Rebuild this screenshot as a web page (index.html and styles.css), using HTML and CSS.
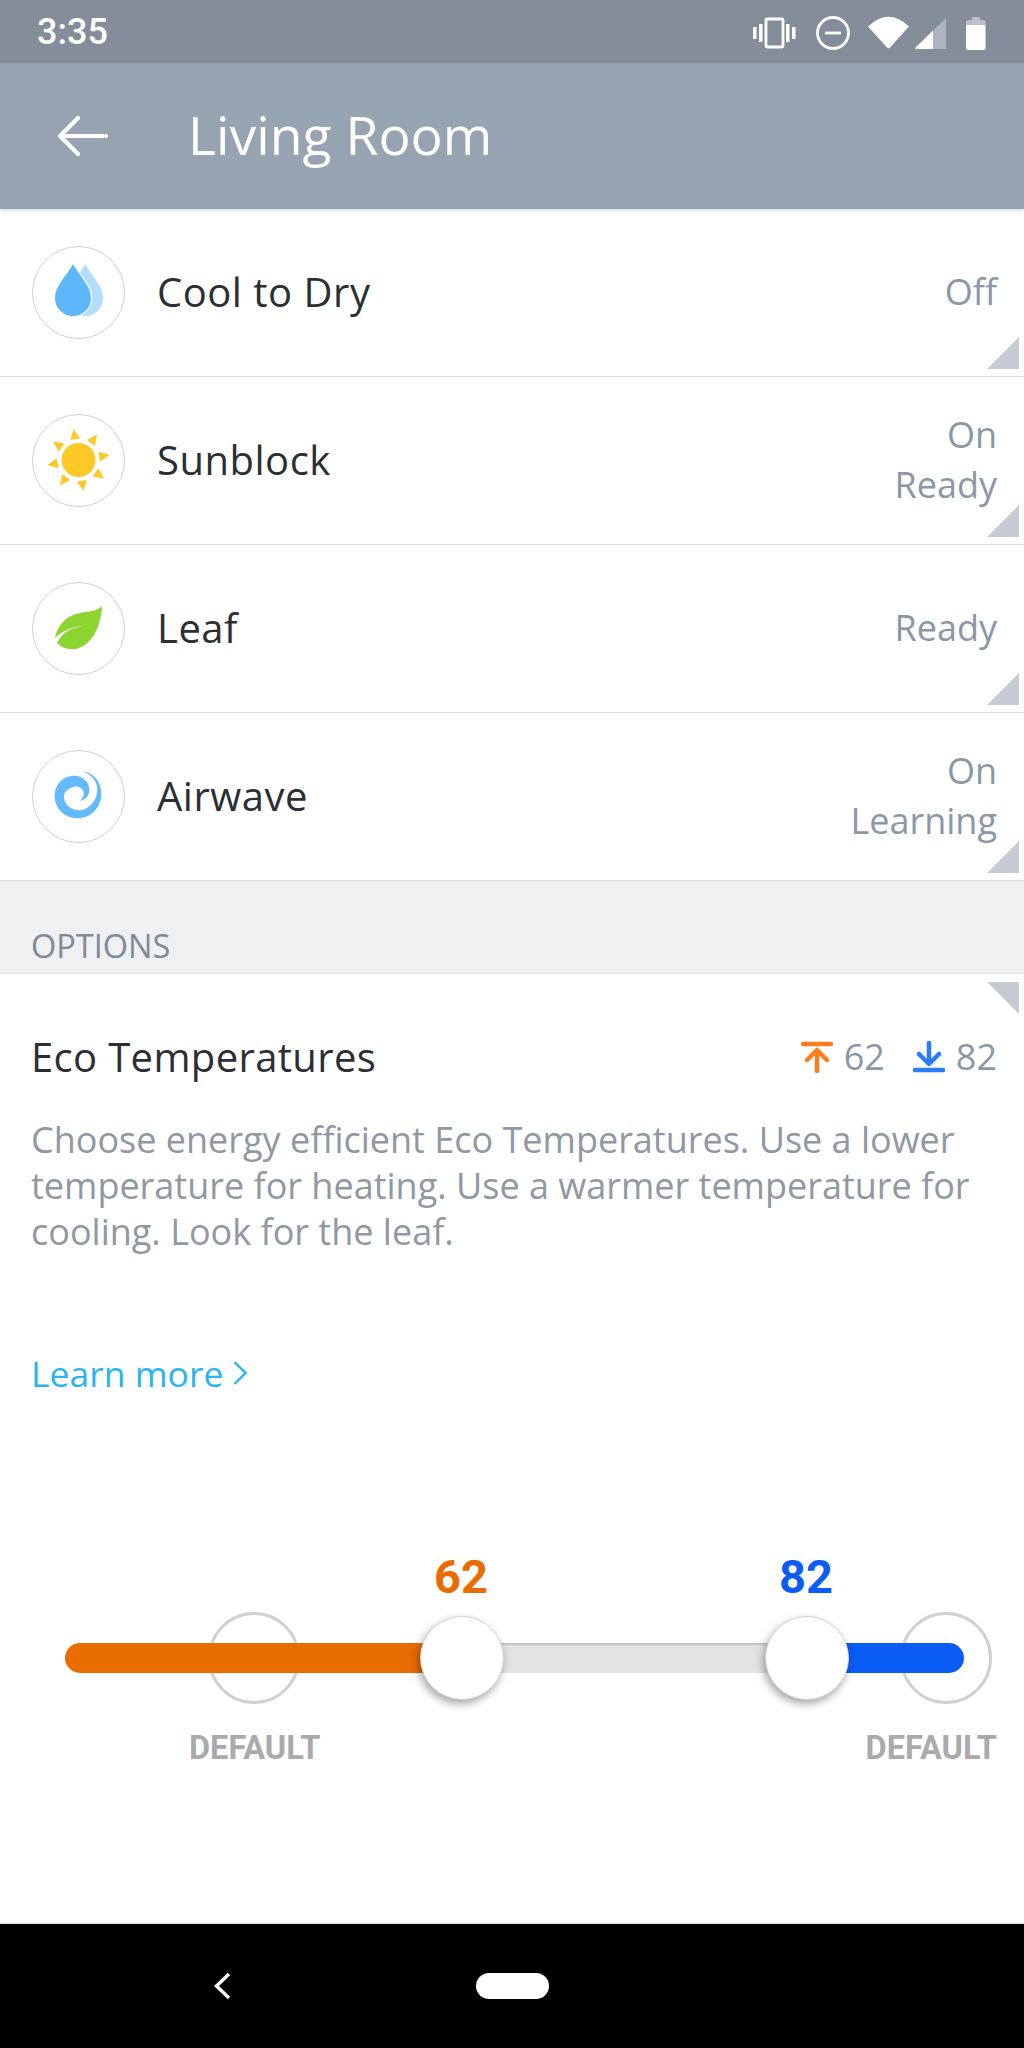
FILE: index.html
```html
<!DOCTYPE html>
<html lang="en">
<head>
<meta charset="utf-8">
<title>Living Room</title>
<link rel="stylesheet" href="styles.css">
</head>
<body>
<header class="status">
  <span class="time">3:35</span>
  <svg class="status-icons" width="250" height="40" viewBox="750 10 250 40">
    <g fill="#fff">
      <rect x="753" y="25" width="3.5" height="12"/><rect x="759" y="22" width="3.5" height="18"/>
      <rect x="786" y="22" width="3.5" height="18"/><rect x="792" y="25" width="3.5" height="12"/>
      <path d="M868 24.500Q888.500 5 909 24.500L890.500 45Q888.500 47.500 886.500 45Z"/>
      <path d="M933 47H916.500Q914.500 47 916 45L933 28.500Z"/>
      <path d="M933 47V28.500L946 16V47Z" fill-opacity=".35"/>
      <path d="M972 18V15.500Q972 15 973 15H979Q980 15 980 15.500V18H983Q985.500 18 985.500 20V23H966V20Q966 18 968.500 18Z" fill-opacity=".45"/>
      <path d="M966 23H985.500V46Q985.500 48 983.500 48H968Q966 48 966 46Z"/>
    </g>
    <g fill="none" stroke="#fff" stroke-width="2.800">
      <rect x="766" y="17" width="17" height="28" rx="1.500"/>
      <circle cx="833" cy="31" r="15.500"/>
      <path d="M825 31H841"/>
    </g>
  </svg>
</header>

<div class="toolbar">
  <svg class="back" width="52" height="44" viewBox="0 0 52 44"><path d="M50 22H4M22 4L4 22L22 40" fill="none" stroke="#fff" stroke-width="4.200" stroke-linecap="round" stroke-linejoin="round"/></svg>
  <h1 class="title">Living Room</h1>
</div>

<section class="rows">
  <div class="row">
    <div class="badge">
      <svg width="94" height="94" viewBox="0 0 94 94">
        <path d="M53 19C59 31 71 40 71 53A18 18 0 0 1 35 53C35 40 47 31 53 19Z" fill="#b4dcfd"/>
        <path d="M41 19C47 31 59 40 59 53A18 18 0 0 1 23 53C23 40 35 31 41 19Z" fill="#5eb6fb" stroke="#fff" stroke-width="2.400" paint-order="stroke"/>
      </svg>
    </div>
    <span class="label">Cool to Dry</span>
    <div class="state">Off</div>
    <span class="corner"></span>
  </div>
  <div class="row">
    <div class="badge">
      <svg width="94" height="94" viewBox="0 0 94 94">
        <g fill="#fdc927">
          <circle cx="46.500" cy="47" r="17"/>
          <path d="M46.500 15.500L41.500 26L51.500 26Z" transform="rotate(-9 46.500 47)"/>
          <path d="M46.500 15.500L41.500 26L51.500 26Z" transform="rotate(36 46.500 47)"/>
          <path d="M46.500 15.500L41.500 26L51.500 26Z" transform="rotate(81 46.500 47)"/>
          <path d="M46.500 15.500L41.500 26L51.500 26Z" transform="rotate(126 46.500 47)"/>
          <path d="M46.500 15.500L41.500 26L51.500 26Z" transform="rotate(171 46.500 47)"/>
          <path d="M46.500 15.500L41.500 26L51.500 26Z" transform="rotate(216 46.500 47)"/>
          <path d="M46.500 15.500L41.500 26L51.500 26Z" transform="rotate(261 46.500 47)"/>
          <path d="M46.500 15.500L41.500 26L51.500 26Z" transform="rotate(306 46.500 47)"/>
        </g>
      </svg>
    </div>
    <span class="label">Sunblock</span>
    <div class="state">On<br>Ready</div>
    <span class="corner"></span>
  </div>
  <div class="row">
    <div class="badge">
      <svg width="94" height="94" viewBox="0 0 94 94">
        <path d="M70 25C64 31 57 30 48 32C36 34 26 42 23 57C31 49 40 47 48 45C54 43 59 41 62 38C57 42 50 45 43 47C35 49 29 54 25 62C30 67 36 69 43 68C58 66 69 48 70 25Z" fill="#8cd42f"/>
      </svg>
    </div>
    <span class="label">Leaf</span>
    <div class="state">Ready</div>
    <span class="corner"></span>
  </div>
  <div class="row">
    <div class="badge">
      <svg width="94" height="94" viewBox="0 0 94 94">
        <g transform="translate(12 10) scale(.3333)">
          <path d="M115 36C150 42 172 70 172 105C172 146 140 178 100 178C62 178 32 148 32 112C32 76 58 50 90 50C118 50 136 70 136 92C136 110 124 122 108 125C118 116 122 106 118 96C112 84 100 80 88 84C70 90 58 100 60 115C62 140 85 155 108 154C135 152 160 125 160 90C160 66 140 46 115 36Z" fill="#63bafc"/>
        </g>
      </svg>
    </div>
    <span class="label">Airwave</span>
    <div class="state">On<br>Learning</div>
    <span class="corner"></span>
  </div>
</section>

<div class="options-head">OPTIONS</div>

<section class="eco">
  <span class="corner corner-top"></span>
  <div class="eco-head">
    <h2 class="eco-title">Eco Temperatures</h2>
    <div class="eco-temps">
      <svg width="32" height="32" viewBox="0 0 32 32"><path d="M2 3H30M16 30V10M6 19L16 9L26 19" fill="none" stroke="#fa7d20" stroke-width="4.500" stroke-linecap="round" stroke-linejoin="round"/></svg>
      <span class="temp-num">62</span>
      <svg class="temp-icon-gap" width="32" height="32" viewBox="0 0 32 32"><path d="M2 29H30M16 2V22M6 13L16 23L26 13" fill="none" stroke="#2a7df4" stroke-width="4.500" stroke-linecap="round" stroke-linejoin="round"/></svg>
      <span class="temp-num">82</span>
    </div>
  </div>
  <p class="eco-text">Choose energy efficient Eco Temperatures. Use a lower temperature for heating. Use a warmer temperature for cooling. Look for the leaf.</p>
  <a class="learn">Learn more<svg width="14" height="24" viewBox="0 0 14 24"><path d="M1.500 1L12.500 12L1.500 23" fill="none" stroke="#29b4f2" stroke-width="2.400"/></svg></a>

  <div class="slider">
    <span class="ring ring-low"></span>
    <span class="ring ring-high"></span>
    <div class="track">
      <span class="seg seg-heat"></span>
      <span class="seg seg-mid"></span>
      <span class="seg seg-cool"></span>
    </div>
    <span class="value value-low">62</span>
    <span class="value value-high">82</span>
    <span class="thumb thumb-low"></span>
    <span class="thumb thumb-high"></span>
    <span class="default default-low">DEFAULT</span>
    <span class="default default-high">DEFAULT</span>
  </div>
</section>

<nav class="navbar">
  <svg class="nav-back" width="18" height="28" viewBox="0 0 18 28"><path d="M16 2L3.500 14L16 26" fill="none" stroke="#fff" stroke-width="3.400"/></svg>
  <span class="nav-home"></span>
</nav>
</body>
</html>
```

FILE: styles.css
```css
* { box-sizing: border-box; }

html, body { margin: 0; padding: 0; }

body {
  width: 1024px;
  height: 2048px;
  display: flex;
  flex-direction: column;
  overflow: hidden;
  background: #fff;
  font-family: "Open Sans", "Liberation Sans", sans-serif;
  color: #2b2f35;
}

.status {
  height: 63px;
  flex: none;
  display: flex;
  align-items: center;
  justify-content: space-between;
  padding: 0 24px 0 37px;
  background: #838e9a;
}

.time {
  font-family: Roboto, sans-serif;
  font-weight: 500;
  font-size: 36px;
  color: #fff;
}

.status-icons { display: block; margin-top: 0; }

.toolbar {
  height: 146px;
  flex: none;
  display: flex;
  align-items: center;
  padding-left: 56px;
  background: #96a3b0;
  box-shadow: 0 1px 4px rgba(0, 0, 0, .18);
  position: relative;
}

.back { flex: none; }

.title {
  margin: 0 0 3px 80px;
  font-weight: 400;
  font-size: 53.500px;
  line-height: 1;
  color: #fff;
}

.rows { flex: none; }

.row {
  height: 168px;
  display: flex;
  align-items: center;
  padding: 0 27px 0 32px;
  border-bottom: 1.500px solid #dcdfe2;
  position: relative;
}

.badge {
  width: 93px;
  height: 93px;
  flex: none;
  margin-bottom: 1px;
  border: 1.500px solid #cfd0d2;
  border-radius: 50%;
  position: relative;
}

.badge svg {
  position: absolute;
  left: -1.500px;
  top: -1.500px;
}

.label {
  margin: 0 0 2px 32px;
  font-size: 40px;
  letter-spacing: .5px;
  color: #2b2f35;
}

.state {
  margin: 0 0 2px auto;
  font-size: 36px;
  line-height: 50px;
  color: #8a97a6;
  text-align: right;
}

.corner {
  position: absolute;
  right: 5px;
  bottom: 7px;
  width: 32px;
  height: 32px;
  background: #c4cbd2;
  clip-path: polygon(100% 0, 100% 100%, 0 100%);
}

.corner-top {
  top: 8px;
  bottom: auto;
  clip-path: polygon(0 0, 100% 0, 100% 100%);
}

.options-head {
  height: 93px;
  flex: none;
  padding: 45px 0 0 31px;
  background: #eef0f2;
  border-bottom: 1.500px solid #dcdfe2;
  font-size: 32.500px;
  line-height: 40px;
  color: #7f8a96;
}

.eco {
  flex: 1;
  position: relative;
  padding: 0 27px 0 31px;
}

.eco-head {
  display: flex;
  align-items: center;
  justify-content: space-between;
  padding-top: 56px;
}

.eco-title {
  margin: 0;
  font-weight: 400;
  font-size: 40px;
  line-height: 54px;
  letter-spacing: .35px;
  color: #2b2f35;
}

.eco-temps {
  display: flex;
  align-items: center;
  font-size: 36px;
  line-height: 54px;
  color: #8a97a6;
}

.temp-num { margin-left: 11px; }

.temp-icon-gap { margin-left: 28px; }

.eco-text {
  margin: 33px -10px 0 0;
  font-size: 36px;
  line-height: 46px;
  color: #8f98a3;
}

.learn {
  display: flex;
  align-items: center;
  gap: 10px;
  margin-top: 94px;
  font-size: 35.500px;
  line-height: 48px;
  color: #29b4f2;
}

.slider {
  position: relative;
  height: 210px;
  margin: 156px -27px 0 -31px;
}

.track {
  position: absolute;
  left: 65px;
  top: 90px;
  width: 899px;
  height: 30px;
  display: flex;
  border-radius: 15px;
  overflow: hidden;
}

.seg { display: block; height: 100%; }

.seg-heat { width: 397px; background: #e86c00; }

.seg-mid {
  width: 345px;
  background: #e3e3e3;
  box-shadow: inset 0 2px 2px rgba(0, 0, 0, .16);
}

.seg-cool { width: 157px; background: #0a5cf5; }

.ring {
  position: absolute;
  top: 59px;
  width: 92px;
  height: 92px;
  border: 3px solid #d0d0d0;
  border-radius: 50%;
  background: #fff;
}

.ring-low { left: 208px; }

.ring-high { left: 900px; }

.thumb {
  position: absolute;
  top: 63px;
  width: 84px;
  height: 84px;
  border-radius: 50%;
  background: #fff;
  border: 1px solid #d4d4d4;
  box-shadow: -2px 4px 8px rgba(0, 0, 0, .35);
}

.thumb-low { left: 420px; }

.thumb-high { left: 765px; }

.value {
  position: absolute;
  top: -3px;
  width: 100px;
  text-align: center;
  font-family: Roboto, sans-serif;
  font-weight: 700;
  font-size: 47px;
  line-height: 54px;
}

.value-low { left: 411px; color: #e86c00; }

.value-high { left: 756px; color: #0a5cf5; }

.default {
  position: absolute;
  top: 177px;
  font-family: Roboto, sans-serif;
  font-weight: 700;
  font-size: 32.500px;
  line-height: 36px;
  color: #aaaaaa;
}

.default-low { left: 189px; }

.default-high { right: 27px; }

.navbar {
  height: 125px;
  flex: none;
  display: flex;
  align-items: center;
  padding: 0 0 0 213px;
  background: #000;
  border-top: 1px solid #dcdcdc;
}

.nav-back { flex: none; }

.nav-home {
  width: 73px;
  height: 26px;
  margin-left: 245px;
  border-radius: 13px;
  background: #fff;
}
```
